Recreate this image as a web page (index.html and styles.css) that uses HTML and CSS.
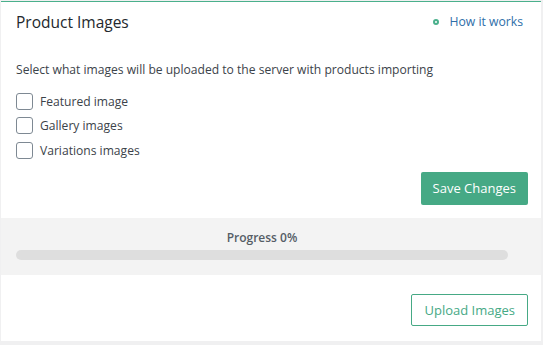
FILE: index.html
```html
<!DOCTYPE html>
<html lang="en">
<head>
  <meta charset="UTF-8" />
  <title>Product Images</title>
  <link rel="stylesheet" href="styles.css">
</head>
<body>

<div class="card">
  <div class="card-header">
    <h2>Product Images</h2>
    <a href="#" class="help-link"><span class="help-dot"></span>How it works</a>
  </div>

  <div class="card-body">
    <p class="intro">Select what images will be uploaded to the server with products importing</p>
    <label class="check-row"><input type="checkbox"><span class="box"></span>Featured image</label>
    <label class="check-row"><input type="checkbox"><span class="box"></span>Gallery images</label>
    <label class="check-row"><input type="checkbox"><span class="box"></span>Variations images</label>
    <div class="actions">
      <button class="btn-primary">Save Changes</button>
    </div>
  </div>

  <div class="progress-box">
    <div class="progress-label">Progress <span id="progressValue">0</span>%</div>
    <div class="progress-track"><div class="progress-fill" style="width: 0%"></div></div>
  </div>

  <div class="card-footer">
    <button class="btn-outline">Upload Images</button>
  </div>
</div>

</body>
</html>
```

FILE: styles.css
```css
body {
  margin: 0;
  background-color: #f0f0f1;
  font-family: "Open Sans", Arial, sans-serif;
  color: #3c434a;
}

.card {
  width: 540px;
  margin-top: 1px;
  margin-left: 1px;
  background-color: white;
  border-top: 1px solid #4ab08c;
}

.card-header {
  display: flex;
  justify-content: space-between;
  align-items: center;
  padding: 7px 18px 0 15px;
  height: 25px;
}

.card-header h2 {
  margin: 0;
  font-size: 15.5px;
  font-weight: 400;
  color: #23282d;
}

.help-link {
  display: flex;
  align-items: center;
  font-size: 12.2px;
  color: #2e6ea8;
  text-decoration: none;
}

.help-dot {
  width: 2px;
  height: 2px;
  border: 2px solid #4ab08c;
  border-radius: 50%;
  margin-right: 11px;
}

.card-body {
  padding: 26px 13px 13px 15px;
}

.intro {
  margin: 0 0 9px;
  font-size: 12.1px;
  line-height: 20px;
}

.check-row {
  display: flex;
  align-items: center;
  height: 24.5px;
  font-size: 12.1px;
}

.check-row input {
  display: none;
}

.box {
  width: 15px;
  height: 15px;
  border: 1px solid #7e8993;
  border-radius: 3px;
  margin-right: 7px;
}

.actions {
  display: flex;
  justify-content: flex-end;
  margin-top: 9px;
}

.btn-primary {
  height: 33px;
  padding: 0 12px;
  background-color: #46a985;
  border: none;
  border-radius: 2px;
  color: white;
  font-family: inherit;
  font-size: 13px;
  cursor: pointer;
}

.progress-box {
  background-color: #f3f3f3;
  padding: 10px 33px 15px 15px;
}

.progress-label {
  text-align: center;
  font-size: 12px;
  font-weight: 600;
  line-height: 20px;
  color: #555d66;
  margin-bottom: 2px;
}

.progress-track {
  height: 10px;
  background-color: #dedede;
  border-radius: 5px;
  overflow: hidden;
}

.progress-fill {
  height: 100%;
  background-color: #46a985;
}

.card-footer {
  display: flex;
  justify-content: flex-end;
  padding: 19px 13px 15px;
}

.btn-outline {
  height: 32px;
  padding: 0 12px;
  background-color: white;
  border: 1px solid #46a985;
  border-radius: 2px;
  color: #46a985;
  font-family: inherit;
  font-size: 13px;
  cursor: pointer;
}
```
